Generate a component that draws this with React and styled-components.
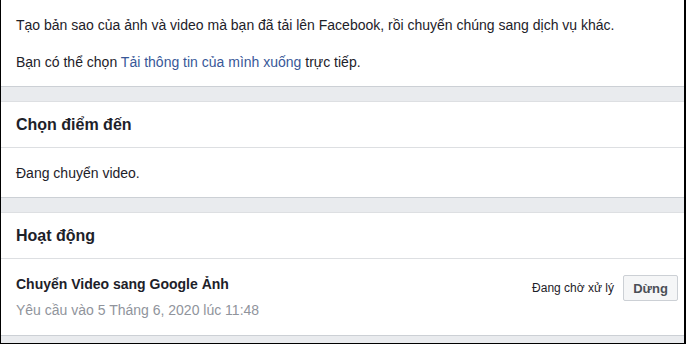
import React from "react";
import styled, { createGlobalStyle } from "styled-components";

const Global = createGlobalStyle`
  html, body { margin: 0; padding: 0; }
  body { font-family: "Liberation Sans", Arial, sans-serif; color: #1d2129; }
  * { box-sizing: border-box; }
`;

const Frame = styled.div`
  width: 686px;
  height: 344px;
  overflow: hidden;
  background: #e9ebee;
  border-left: 1px solid #000;
  border-right: 2px solid #000;
  border-bottom: 1px solid #000;
  display: flex;
  flex-direction: column;
  gap: 14px;
`;

const Section = styled.section`
  background: #fff;
  border-top: ${(p) => (p.$first ? "none" : "1px solid #dddfe2")};
  border-bottom: 1px solid #ccd0d5;
  flex-shrink: 0;
`;

const Intro = styled.div`
  padding: 16px 15px 15px;
  display: flex;
  flex-direction: column;
  gap: 19px;
`;

const Para = styled.p`
  margin: 0;
  font-size: 14px;
  line-height: 18px;
`;

const Link = styled.a`
  color: #385898;
  text-decoration: none;
`;

const Header = styled.h2`
  margin: 0;
  height: 46px;
  padding: 0 15px;
  display: flex;
  align-items: center;
  font-size: 16px;
  font-weight: bold;
  border-bottom: 1px solid #dddfe2;
`;

const Body = styled.div`
  padding: 16px 15px 15px;
  font-size: 14px;
  line-height: 18px;
`;

const Row = styled.div`
  padding: 16px 6px 16px 15px;
  display: flex;
  justify-content: space-between;
  align-items: flex-start;
`;

const RowTitle = styled.div`
  font-size: 14px;
  line-height: 18px;
  font-weight: bold;
`;

const RowSub = styled.div`
  margin-top: 8px;
  font-size: 14px;
  line-height: 18px;
  color: #90949c;
`;

const Actions = styled.div`
  display: flex;
  align-items: center;
  gap: 9px;
  font-size: 12px;
  color: #1d2129;
`;

const Button = styled.button`
  height: 26px;
  width: 55px;
  padding: 0;
  background: #f5f6f7;
  border: 1px solid #ccd0d5;
  border-radius: 2px;
  font-family: inherit;
  font-size: 13px;
  font-weight: bold;
  color: #4b4f56;
`;

export default function App() {
  return (
    <>
      <Global />
      <Frame>
        <Section $first>
          <Intro>
            <Para>
              Tạo bản sao của ảnh và video mà bạn đã tải lên Facebook, rồi chuyển chúng sang dịch vụ khác.
            </Para>
            <Para>
              Bạn có thể chọn <Link href="#">Tải thông tin của mình xuống</Link> trực tiếp.
            </Para>
          </Intro>
        </Section>
        <Section>
          <Header>Chọn điểm đến</Header>
          <Body>Đang chuyển video.</Body>
        </Section>
        <Section>
          <Header>Hoạt động</Header>
          <Row>
            <div>
              <RowTitle>Chuyển Video sang Google Ảnh</RowTitle>
              <RowSub>Yêu cầu vào 5 Tháng 6, 2020 lúc 11:48</RowSub>
            </div>
            <Actions>
              <span>Đang chờ xử lý</span>
              <Button>Dừng</Button>
            </Actions>
          </Row>
        </Section>
      </Frame>
    </>
  );
}
